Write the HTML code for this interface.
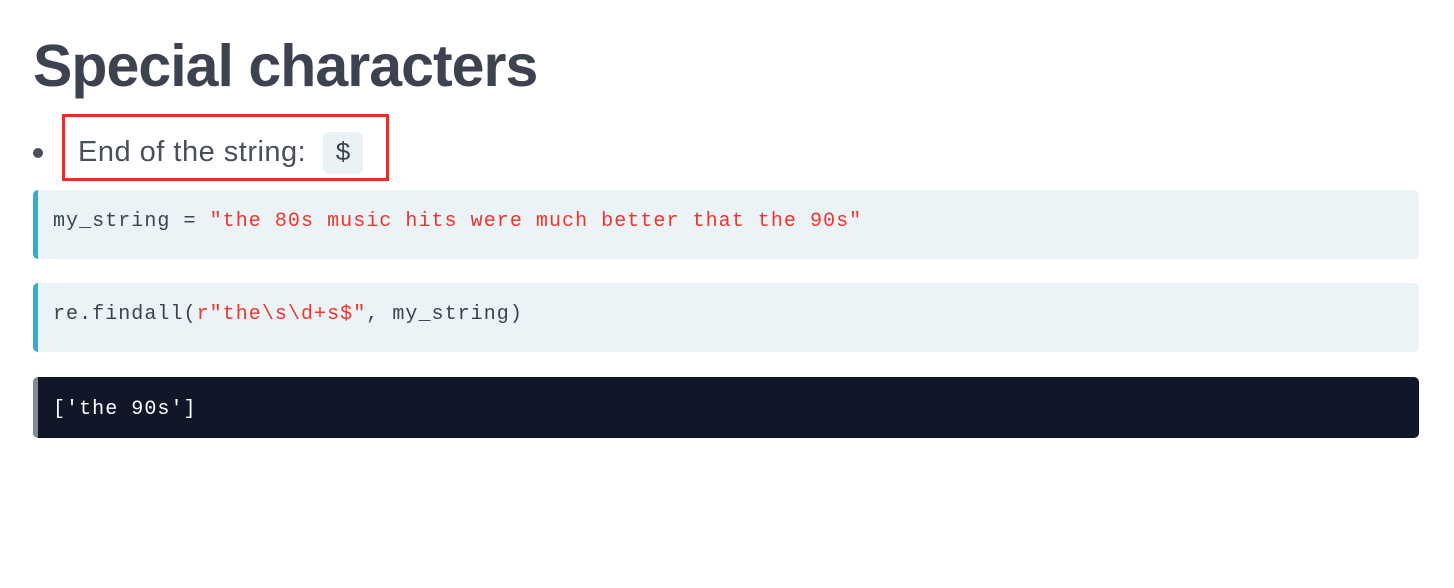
<!DOCTYPE html>
<html><head><style>
body{margin:0;width:1454px;height:588px;background:#fff;position:relative;overflow:hidden;font-family:"Liberation Sans",sans-serif;}
h1{position:absolute;left:33px;top:26px;margin:0;font-size:59px;font-weight:bold;color:#3d4251;letter-spacing:-0.95px;line-height:80px;}
.dot{position:absolute;left:33px;top:148px;width:10px;height:10px;border-radius:50%;background:#4a4f5c;}
.box{position:absolute;left:62px;top:114px;width:321px;height:61px;border:3px solid #f22b22;}
.txt{position:absolute;left:78px;top:133px;font-size:29px;color:#4a4f5c;letter-spacing:0.5px;line-height:38px;}
.chip{position:absolute;left:323px;top:132px;width:40px;height:42px;background:#eaf2f5;border-radius:6px;color:#3d4251;font-family:"Liberation Mono",monospace;font-size:26px;text-align:center;line-height:42px;}
.code{position:absolute;left:33px;width:1386px;border-left:5px solid #3aa9c8;background:#ebf3f6;border-radius:5px;font-family:"Liberation Mono",monospace;font-size:20px;letter-spacing:1.05px;color:#3d4251;box-sizing:border-box;padding-left:15px;}
.s{color:#f0332b;}
.out{background:#0f1729;border-left-color:#828b93;color:#fff;}
</style></head><body>
<h1>Special characters</h1>
<div class="dot"></div>
<div class="box"></div>
<div class="txt">End of the string:</div>
<div class="chip">$</div>
<div class="code" style="top:190px;height:69px;line-height:64px;">my_string = <span class="s">"the 80s music hits were much better that the 90s"</span></div>
<div class="code" style="top:283px;height:69px;line-height:64px;">re.findall(<span class="s">r"the\s\d+s$"</span>, my_string)</div>
<div class="code out" style="top:377px;height:61px;line-height:66px;">['the 90s']</div>
</body></html>
